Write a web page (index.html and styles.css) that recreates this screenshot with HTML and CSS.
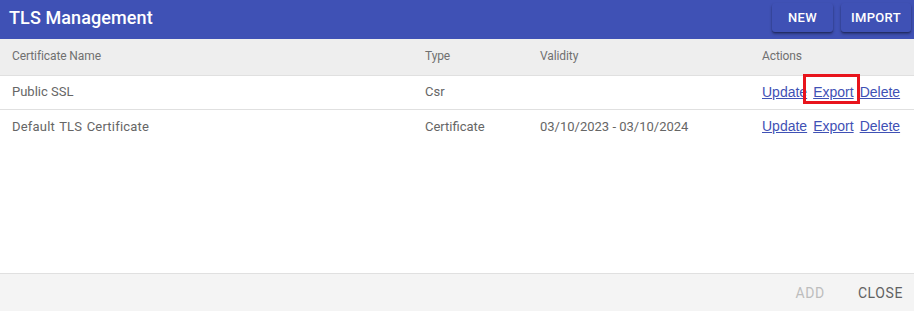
FILE: index.html
```html
<!DOCTYPE html>
<html>
<head>
<meta charset="utf-8">
<link rel="stylesheet" href="styles.css">
</head>
<body>
<div class="dialog">
  <header class="topbar">
    <h1 class="title">TLS Management</h1>
    <div class="top-actions">
      <button class="raised new">New</button>
      <button class="raised import">Import</button>
    </div>
  </header>
  <div class="table">
    <div class="row head">
      <div class="cell">Certificate Name</div>
      <div class="cell">Type</div>
      <div class="cell">Validity</div>
      <div class="cell">Actions</div>
    </div>
    <div class="row body bordered">
      <div class="cell">Public SSL</div>
      <div class="cell">Csr</div>
      <div class="cell"></div>
      <div class="cell actions"><a href="#" class="link">Update</a><a href="#" class="link highlight">Export</a><a href="#" class="link">Delete</a></div>
    </div>
    <div class="row body">
      <div class="cell wide">Default TLS Certificate</div>
      <div class="cell">Certificate</div>
      <div class="cell">03/10/2023 - 03/10/2024</div>
      <div class="cell actions"><a href="#" class="link">Update</a><a href="#" class="link">Export</a><a href="#" class="link">Delete</a></div>
    </div>
  </div>
  <div class="spacer"></div>
  <footer class="footer">
    <button class="flat disabled">Add</button>
    <button class="flat">Close</button>
  </footer>
</div>
</body>
</html>
```
FILE: styles.css
```css
html, body {
  margin: 0;
  padding: 0;
  background: #ffffff;
}
.dialog {
  width: 914px;
  height: 311px;
  display: flex;
  flex-direction: column;
  font-family: Roboto, "Liberation Sans", Arial, sans-serif;
}
.topbar {
  height: 39px;
  background: #3f51b5;
  display: flex;
  align-items: center;
  justify-content: space-between;
  padding: 0 3px 0 9px;
  box-sizing: border-box;
  flex: none;
}
.title {
  margin: 0;
  color: #ffffff;
  font-size: 18px;
  font-weight: 500;
  letter-spacing: 0.1px;
  margin-top: -4px;
}
.top-actions {
  display: flex;
  gap: 8px;
  margin-top: -4px;
}
.raised {
  height: 29px;
  border: none;
  border-radius: 3px;
  background: #3f51b5;
  color: #ffffff;
  font-family: Roboto, "Liberation Sans", Arial, sans-serif;
  font-weight: 500;
  font-size: 13px;
  letter-spacing: 0.3px;
  text-transform: uppercase;
  box-shadow: 0 2px 3px rgba(0, 0, 0, 0.35), 0 1px 1px rgba(0, 0, 0, 0.2);
  padding: 0;
}
.new { width: 61px; }
.import { width: 70px; }
.table {
  flex: none;
}
.row {
  display: grid;
  grid-template-columns: 413px 115px 222px 164px;
  align-items: center;
}
.cell {
  padding-left: 12px;
  white-space: nowrap;
}
.head {
  height: 37px;
  background: #eeeeee;
  border-bottom: 1px solid #e0e0e0;
  box-sizing: border-box;
  color: #707070;
  font-size: 12px;
  letter-spacing: -0.1px;
  padding-bottom: 2px;
}
.body {
  height: 34px;
  box-sizing: border-box;
  color: #666666;
  font-size: 13px;
  padding-bottom: 2px;
}
.wide {
  letter-spacing: 0.2px;
  word-spacing: 1px;
}
.bordered {
  border-bottom: 1px solid #e0e0e0;
}
.actions {
  display: flex;
  gap: 6px;
}
.link {
  font-family: "Liberation Sans", Arial, sans-serif;
  font-size: 14px;
  color: #3f51b5;
  text-decoration: underline;
  position: relative;
}
.highlight::after {
  content: "";
  position: absolute;
  left: -10px;
  right: -6px;
  top: -10px;
  bottom: -4px;
  border: 3px solid #e8141c;
}
.spacer {
  flex: 1;
}
.footer {
  height: 38px;
  background: #f4f4f4;
  border-top: 1px solid #e0e0e0;
  box-sizing: border-box;
  display: flex;
  justify-content: flex-end;
  align-items: center;
  gap: 17px;
  padding-right: 3px;
  flex: none;
}
.flat {
  border: none;
  background: transparent;
  font-family: Roboto, "Liberation Sans", Arial, sans-serif;
  font-size: 14px;
  text-transform: uppercase;
  color: #616161;
  padding: 6px 8px;
  letter-spacing: 0.6px;
}
.flat.disabled {
  color: #bdbdbd;
}
```
